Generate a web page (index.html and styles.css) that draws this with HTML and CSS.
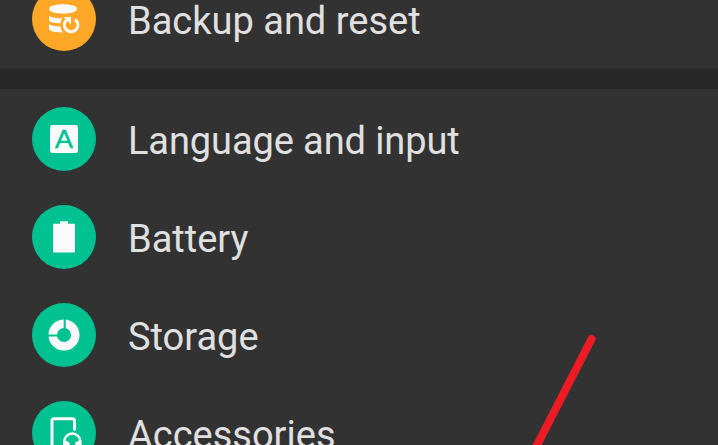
FILE: index.html
```html
<!DOCTYPE html>
<html lang="en">
<head>
<meta charset="utf-8">
<title>Settings</title>
<link rel="stylesheet" href="styles.css">
</head>
<body>
<main class="settings">
  <section class="group group-top">
    <div class="row">
      <svg class="icon orange" viewBox="0 0 64 64">
        <path d="M17 22C17 15.800 45 15.800 45 22C45 28.200 17 28.200 17 22z"/>
        <path d="M17 29C20 30.800 24.500 31.200 30.500 31.300C29 33 28.500 34.500 28.500 36.200C22 36.200 17 35.200 17 33zM17 37.200C20 38.800 24 39.300 28.500 39.500C28.700 42 29.500 43.800 31 45.400C24 45.600 17 44.500 17 42z"/>
        <path class="line" d="M43 32.400A6.800 6.800 0 1 1 34.500 33"/>
        <path d="M31.500 30h7.500v7.500z"/>
      </svg>
      <span class="label">Backup and reset</span>
    </div>
  </section>
  <section class="group">
    <div class="row">
      <svg class="icon green" viewBox="0 0 64 64">
        <rect x="18" y="18" width="28" height="28" rx="2.500"/>
        <text class="letter" x="23" y="41" textLength="18" lengthAdjust="spacingAndGlyphs">A</text>
      </svg>
      <span class="label tight">Language and input</span>
    </div>
    <div class="row">
      <svg class="icon green" viewBox="0 0 64 64">
        <path d="M21 18.800h7v-2.500h8v2.500h7v28.700h-22z"/>
      </svg>
      <span class="label">Battery</span>
    </div>
    <div class="row">
      <svg class="icon green" viewBox="0 0 64 64">
        <circle class="ring" cx="32" cy="32" r="11.300"/>
        <path class="gap" d="M32.700 14v12M14 32.500h12"/>
      </svg>
      <span class="label">Storage</span>
    </div>
    <div class="row">
      <svg class="icon green" viewBox="0 0 64 64">
        <path class="line device" d="M27 48h-5a2 2 0 0 1-2-2V19.800a2 2 0 0 1 2-2h18.500a2 2 0 0 1 2 2V29.500"/>
        <path class="line band" d="M32.300 45v-4.500a8 8 0 0 1 16 0V45"/>
        <path d="M31.500 38.500l6 3v7h-6zM49.200 38.500l-6 3v7h6z"/>
      </svg>
      <span class="label">Accessories</span>
    </div>
  </section>
  <svg class="marker" viewBox="0 0 90 120"><path d="M71.500 14L14 126"/></svg>
</main>
</body>
</html>
```

FILE: styles.css
```css
body {
  margin: 0;
  background: #272727;
}

.settings {
  position: relative;
  height: 445px;
  overflow: hidden;
  font-family: Roboto, sans-serif;
}

.group {
  padding-top: 1px;
  margin-bottom: 20px;
  background: #323232;
}

.group-top {
  height: 69px;
  padding: 0;
  display: flex;
  flex-direction: column;
  justify-content: flex-end;
}

.row {
  display: flex;
  flex: none;
  align-items: center;
  gap: 32px;
  height: 98px;
  padding: 0 32px;
}

.group-top .row {
  margin-bottom: 1px;
}

.icon {
  flex: none;
  width: 64px;
  height: 64px;
  border-radius: 50%;
  fill: #fafafa;
}

.orange {
  background: #ffa726;
}

.green {
  background: #00c291;
}

.line {
  fill: none;
  stroke: #fafafa;
  stroke-width: 3;
}

.band {
  stroke-width: 2.5;
}

.letter {
  fill: #00c291;
  stroke: #00c291;
  stroke-width: 0.4;
  font: 25px "Liberation Sans", sans-serif;
}

.ring {
  fill: none;
  stroke: #fafafa;
  stroke-width: 8.5;
}

.gap {
  stroke: #00c291;
  stroke-width: 2;
}

.label {
  padding-top: 4px;
  color: #e0e0e0;
  font-size: 38px;
  line-height: 44px;
  white-space: nowrap;
}

.tight {
  letter-spacing: -0.1px;
}

.marker {
  position: absolute;
  left: 520px;
  top: 325px;
  width: 90px;
  height: 120px;
  fill: none;
  stroke: #ed1c24;
  stroke-width: 8;
  stroke-linecap: round;
}
```
